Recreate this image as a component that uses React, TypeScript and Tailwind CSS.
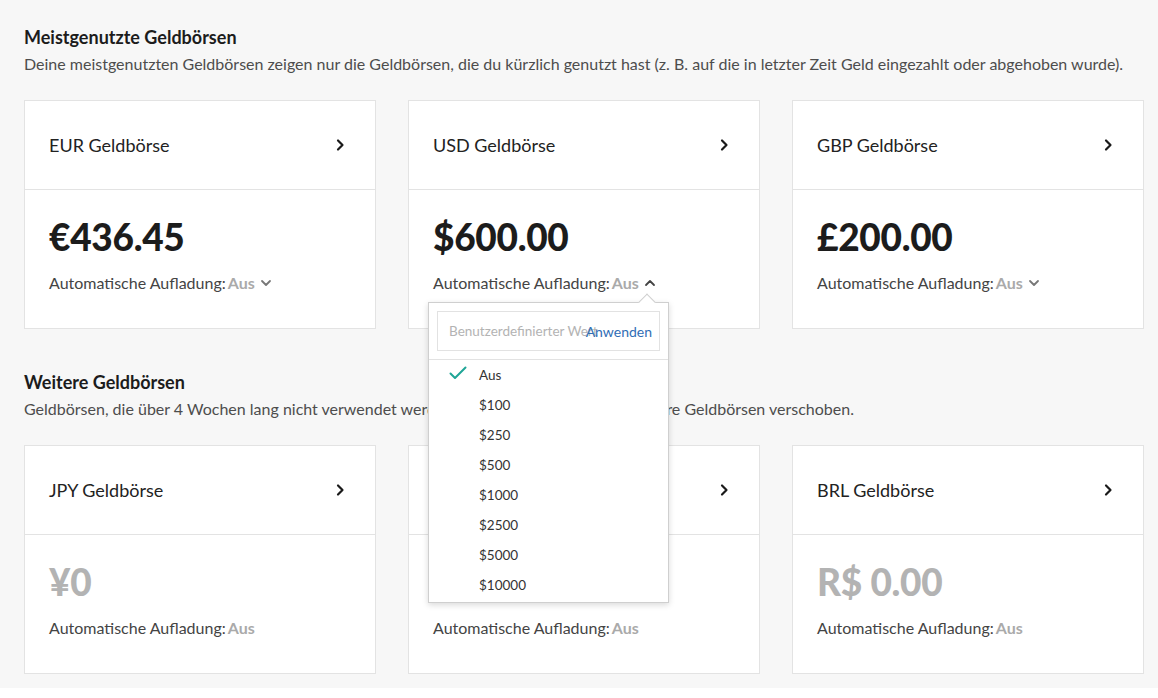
import React from "react";

const font = { fontFamily: "Lato, 'Open Sans', Arial, sans-serif" };

function ChevronRight() {
  return (
    <svg width="10" height="14" viewBox="0 0 10 14" fill="none">
      <path d="M3 2.5 L7.5 7 L3 11.5" stroke="#1a1a1a" strokeWidth="2.2" strokeLinecap="round" strokeLinejoin="round" />
    </svg>
  );
}

function ChevronSmall({ up }: { up?: boolean }) {
  return (
    <svg width="12" height="8" viewBox="0 0 12 8" fill="none">
      <path
        d={up ? "M2 6 L6 2 L10 6" : "M2 2 L6 6 L10 2"}
        stroke={up ? "#444" : "#777"}
        strokeWidth="1.8"
        strokeLinecap="round"
        strokeLinejoin="round"
      />
    </svg>
  );
}

type W = { name: string; amount: string; muted?: boolean; chevron?: "down" | "up" | null; dropdown?: boolean };

function Dropdown() {
  const items = ["$100", "$250", "$500", "$1000", "$2500", "$5000", "$10000"];
  return (
    <div className="absolute left-[19px] top-[201px] w-[241px] bg-white border border-[#cfcfcf] shadow-[0_2px_6px_rgba(0,0,0,0.15)] z-10">
      <div className="absolute -top-[7px] right-[15px] w-3 h-3 bg-white border-l border-t border-[#cfcfcf] rotate-45" />
      <div className="relative px-2 pt-2 pb-2 border-b border-[#e2e2e2]">
        <div className="relative flex items-center h-[40px] border border-[#e2e2e2] pr-[7px] text-[13.5px]">
          <span className="absolute left-[11px] text-[#b3b3b3] whitespace-nowrap">Benutzerdefinierter Wert</span>
          <span className="relative ml-auto text-[#2f6db5] text-[14px]">Anwenden</span>
        </div>
      </div>
      <div className="relative pb-[2px]">
        <div className="flex items-center h-[30px] pl-[50px] text-[13.5px] text-[#333] relative">
          <svg className="absolute left-[20px] top-[6px]" width="18" height="14" viewBox="0 0 18 14" fill="none">
            <path d="M1.5 7.5 L6 12 L16.5 1.5" stroke="#1fa596" strokeWidth="2" strokeLinecap="round" strokeLinejoin="round" />
          </svg>
          Aus
        </div>
        {items.map((i) => (
          <div key={i} className="flex items-center h-[30px] pl-[50px] text-[13.5px] text-[#333]">
            {i}
          </div>
        ))}
      </div>
    </div>
  );
}

function Card({ w }: { w: W }) {
  return (
    <div className="relative bg-white border border-[#e3e3e3] h-[229px] flex flex-col">
      <div className="h-[89px] flex items-center justify-between pl-6 pr-[30px] border-b border-[#e3e3e3]">
        <span className="text-[18px] text-[#222]">{w.name}</span>
        <ChevronRight />
      </div>
      <div className="flex-1 px-6 pt-[27px]">
        <div className={`text-[37px] font-black leading-[40px] tracking-[-0.3px] ${w.muted ? "text-[#b3b3b3]" : "text-[#1c1c1c]"}`}>
          {w.amount}
        </div>
        <div className="mt-[16px] flex items-center text-[16px] leading-[20px] text-[#444]">
          <span>Automatische Aufladung:</span>
          <span className="ml-[2px] font-bold text-[#aaaaaa]">Aus</span>
          {w.chevron && (
            <span className="ml-[5px] flex items-center">
              <ChevronSmall up={w.chevron === "up"} />
            </span>
          )}
        </div>
      </div>
      {w.dropdown && <Dropdown />}
    </div>
  );
}

export default function App() {
  const top: W[] = [
    { name: "EUR Geldbörse", amount: "€436.45", chevron: "down" },
    { name: "USD Geldbörse", amount: "$600.00", chevron: "up", dropdown: true },
    { name: "GBP Geldbörse", amount: "£200.00", chevron: "down" },
  ];
  const other: W[] = [
    { name: "JPY Geldbörse", amount: "¥0", muted: true },
    { name: "CAD Geldbörse", amount: "CA$0.00", muted: true },
    { name: "BRL Geldbörse", amount: "R$ 0.00", muted: true },
  ];
  return (
    <div style={font} className="bg-white min-h-[698px]">
      <div className="bg-[#f7f7f7] pt-[27px] pb-[14px] pl-6">
        <div className="w-[1120px]">
          <h2 className="text-[18px] font-bold text-[#1c1c1c] leading-[20px]">Meistgenutzte Geldbörsen</h2>
          <p className="mt-[7px] text-[16px] text-[#4d4d4d] leading-[20px] whitespace-nowrap">
            Deine meistgenutzten Geldbörsen zeigen nur die Geldbörsen, die du kürzlich genutzt hast (z. B. auf die in letzter Zeit Geld eingezahlt oder abgehoben wurde).
          </p>
          <div className="mt-[26px] grid grid-cols-3 gap-8">
            {top.map((w) => (
              <Card key={w.name} w={w} />
            ))}
          </div>
          <h2 className="mt-[43px] text-[18px] font-bold text-[#1c1c1c] leading-[20px]">Weitere Geldbörsen</h2>
          <p className="mt-[7px] text-[16px] text-[#4d4d4d] leading-[20px] whitespace-nowrap">
            Geldbörsen, die über 4 Wochen lang nicht verwendet werden, werden automatisch in Weitere Geldbörsen verschoben.
          </p>
          <div className="mt-[26px] grid grid-cols-3 gap-8">
            {other.map((w) => (
              <Card key={w.name} w={w} />
            ))}
          </div>
        </div>
      </div>
    </div>
  );
}
